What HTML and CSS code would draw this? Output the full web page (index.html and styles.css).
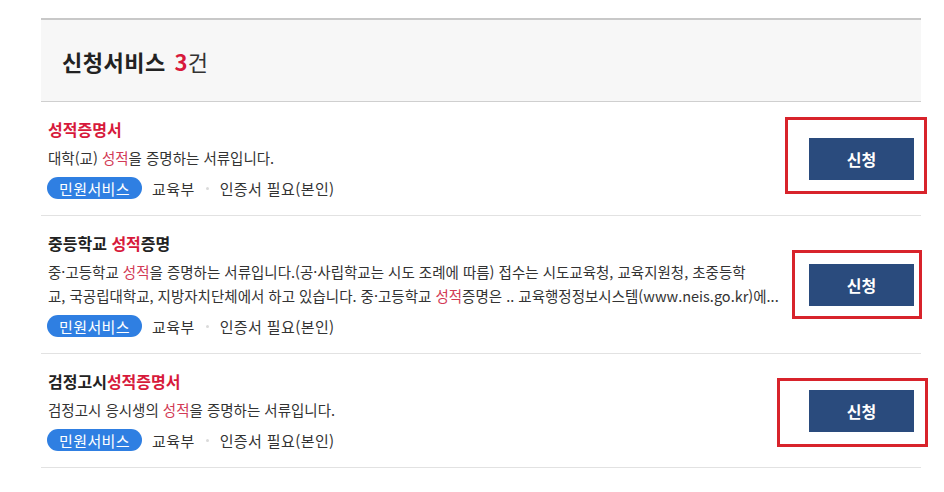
FILE: index.html
```html
<!DOCTYPE html>
<html lang="ko">
<head>
<meta charset="utf-8">
<title>신청서비스</title>
<link rel="stylesheet" href="styles.css">
</head>
<body>
<div class="page">
  <section class="services">
    <header class="services-head">
      <h2 class="services-title">신청서비스 <em class="count">3</em><span class="unit">건</span></h2>
    </header>
    <ul class="service-list">
      <li class="service">
        <div class="service-body">
          <h3 class="service-name"><span class="hl">성적증명서</span></h3>
          <p class="service-desc">대학(교) <span class="hl">성적</span>을 증명하는 서류입니다.</p>
          <div class="service-meta">
            <span class="pill">민원서비스</span>
            <span class="meta-item">교육부</span>
            <span class="meta-dot"></span>
            <span class="meta-item">인증서 필요(본인)</span>
          </div>
        </div>
        <button class="apply" type="button">신청</button>
        <span class="mark mark-1"></span>
      </li>
      <li class="service">
        <div class="service-body">
          <h3 class="service-name">중등학교 <span class="hl">성적</span>증명</h3>
          <p class="service-desc clamp">중·고등학교 <span class="hl">성적</span>을 증명하는 서류입니다.(공·사립학교는 시도 조례에 따름) 접수는 시도교육청, 교육지원청, 초중등학<br>교, 국공립대학교, 지방자치단체에서 하고 있습니다. 중·고등학교 <span class="hl">성적</span>증명은 .. 교육행정정보시스템(www.neis.go.kr)에...</p>
          <div class="service-meta">
            <span class="pill">민원서비스</span>
            <span class="meta-item">교육부</span>
            <span class="meta-dot"></span>
            <span class="meta-item">인증서 필요(본인)</span>
          </div>
        </div>
        <button class="apply" type="button">신청</button>
        <span class="mark mark-2"></span>
      </li>
      <li class="service">
        <div class="service-body">
          <h3 class="service-name">검정고시<span class="hl">성적증명서</span></h3>
          <p class="service-desc">검정고시 응시생의 <span class="hl">성적</span>을 증명하는 서류입니다.</p>
          <div class="service-meta">
            <span class="pill">민원서비스</span>
            <span class="meta-item">교육부</span>
            <span class="meta-dot"></span>
            <span class="meta-item">인증서 필요(본인)</span>
          </div>
        </div>
        <button class="apply" type="button">신청</button>
        <span class="mark mark-3"></span>
      </li>
    </ul>
  </section>
</div>
</body>
</html>
```
FILE: styles.css
```css
* { box-sizing: border-box; }
html, body { margin: 0; padding: 0; background: #fff; }
body {
  font-family: "Noto Sans CJK KR", "Noto Sans", "Liberation Sans", sans-serif;
  color: #333;
}
.page {
  padding: 18px 0 0 41px;
}
.services {
  width: 880px;
}
.services-head {
  height: 84px;
  border-top: 2px solid #c8c8c8;
  border-bottom: 1px solid #cfcfcf;
  background: #f7f7f7;
  display: flex;
  align-items: center;
  padding-left: 21px;
}
.services-title {
  margin: 0;
  font-size: 22px;
  line-height: 30px;
  font-weight: 700;
  letter-spacing: 0.5px;
  color: #222;
}
.count {
  font-style: normal;
  color: #d7193b;
  margin-left: 2px;
}
.unit {
  font-weight: 400;
  color: #333;
}
.service-list {
  list-style: none;
  margin: 0;
  padding: 0;
}
.service {
  position: relative;
  display: flex;
  align-items: center;
  padding: 16px 7px 16px 7px;
  border-bottom: 1px solid #e2e2e2;
}
.service-body {
  flex: 0 0 740px;
  min-width: 0;
}
.service-name {
  margin: 0;
  font-size: 16px;
  line-height: 22px;
  font-weight: 700;
  color: #222;
}
.hl { color: #d7193b; }
.service-desc {
  margin: 6px 0 0;
  font-size: 14.5px;
  line-height: 24px;
  color: #333;
}
.service-desc .hl { color: #d23a55; }
.clamp {
  display: -webkit-box;
  -webkit-box-orient: vertical;
  -webkit-line-clamp: 2;
  overflow: hidden;
}
.service-meta {
  margin-top: 7px;
  display: flex;
  align-items: center;
  height: 22px;
  font-size: 15px;
  letter-spacing: 0.4px;
  color: #333;
}
.pill {
  display: inline-flex;
  align-items: center;
  height: 22px;
  padding: 0 12px;
  border-radius: 11px;
  background: #2f7fe2;
  color: #fff;
  margin: 0 10px 0 -1px;
}
.meta-dot {
  width: 3px;
  height: 3px;
  border-radius: 50%;
  background: #dadada;
  margin: 0 11px;
}
.apply {
  margin-left: auto;
  width: 105px;
  height: 42px;
  border: 0;
  background: #2a4b7d;
  color: #fff;
  font-family: inherit;
  font-size: 16px;
  font-weight: 700;
  cursor: pointer;
}
.mark {
  position: absolute;
  border: 3px solid #d8232b;
  pointer-events: none;
}
.mark-1 { left: 744px; top: 15px; width: 142px; height: 77px; }
.mark-2 { left: 751px; top: 34px; width: 130px; height: 69px; }
.mark-3 { left: 736px; top: 24px; width: 151px; height: 69px; }
```
